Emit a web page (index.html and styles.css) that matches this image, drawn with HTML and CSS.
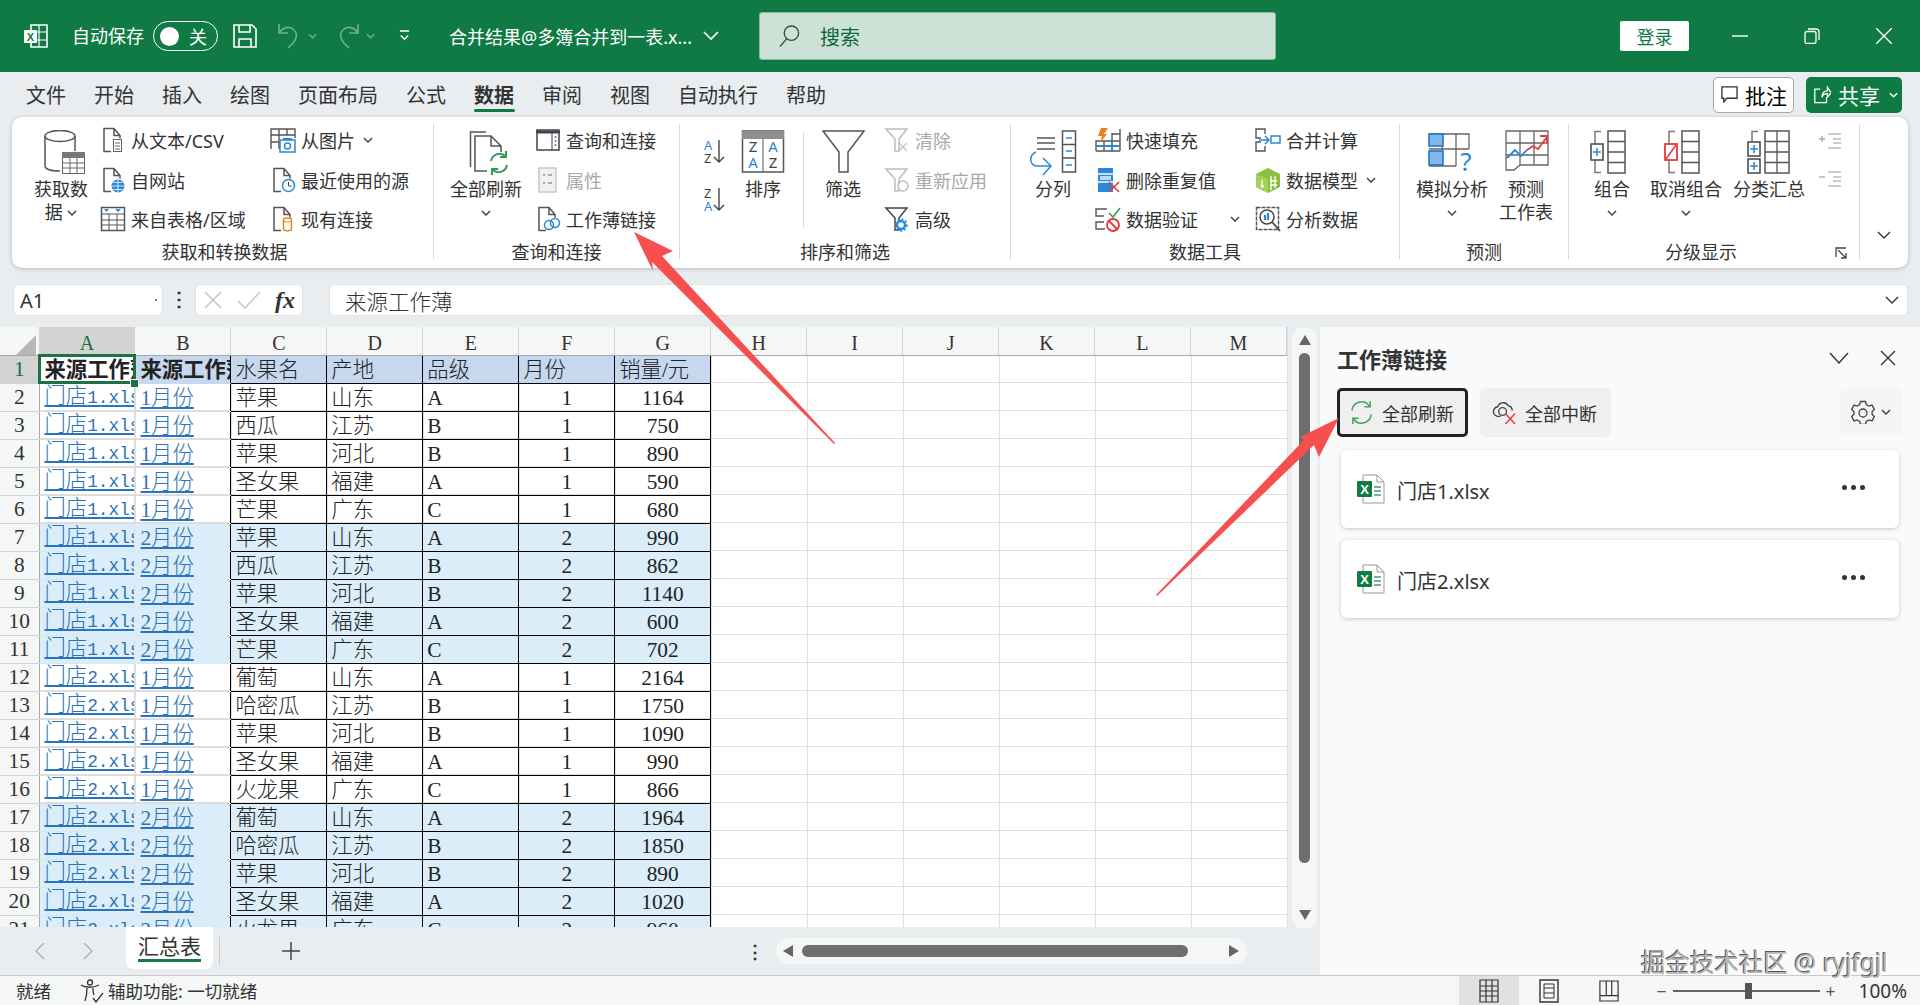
FILE: index.html
```html
<!DOCTYPE html>
<html lang="zh-CN">

<head>
    <meta charset="UTF-8">
    <title>合并结果@多簿合并到一表.xlsx - Excel</title>
    <link rel="stylesheet" href="styles.css">
</head>

<body>
    <svg class="sprite">
        <symbol id="chev" viewBox="0 0 10 6"><path d="M1 1l4 4 4-4" fill="none" stroke="#444" stroke-width="1.5"/></symbol>
        <symbol id="chevw" viewBox="0 0 10 6"><path d="M1 1l4 4 4-4" fill="none" stroke="#fff" stroke-width="1.5"/></symbol>
        <symbol id="doc" viewBox="0 0 26 26"><path d="M11 24.5H4V1.5h10l6 7v3M14 1.5v7h6" fill="none" stroke="#555" stroke-width="1.5"/></symbol>
        <symbol id="funnel" viewBox="0 0 26 26"><path d="M2 2h21l-8 10v12h-4V12z" fill="none" stroke="currentColor" stroke-width="1.5"/></symbol>
        <symbol id="xl" viewBox="0 0 28 30"><path d="M6 1h14l7 7v21H6z" fill="#fff" stroke="#999"/><path d="M20 1v7h7" fill="none" stroke="#999"/><path d="M17 13h7M17 17h7M17 21h7" stroke="#4a9a6b" stroke-width="1.5"/><rect y="7" width="15" height="16" rx="1" fill="#107c41"/><text x="7.5" y="20" class="xl-x">X</text></symbol>
    </svg>

    <header class="titlebar">
        <svg class="i-excel" viewBox="0 0 24 24"><path d="M7 1h16v22H7z" fill="none" stroke="#fff" stroke-width="1.6"/><path d="M15 1v22M7 8h16M7 16h16" stroke="#fff" stroke-width="1.2"/><rect y="6" width="13" height="13" rx="1" fill="#fff"/><text x="6.5" y="16.5" class="xl-g">X</text></svg>
        <span class="qa-label">自动保存</span>
        <div class="toggle"><i class="knob"></i><span>关</span></div>
        <svg class="i-save" viewBox="0 0 24 24"><path d="M1 1h18l4 4v18H1zM6 1v7h11V1M6 23v-8h12v8" fill="none" stroke="#fff" stroke-width="1.6"/></svg>
        <svg class="i-undo" viewBox="0 0 25 26"><path d="M2 1v9h9M2 10c4-6 10-7 14-4 5 4 4 10 0 14l-5 5" fill="none" stroke="#6fb08d" stroke-width="1.6"/></svg>
        <svg class="chev-sm" viewBox="0 0 10 6"><path d="M1 1l4 4 4-4" fill="none" stroke="#6fb08d" stroke-width="1.5"/></svg>
        <svg class="i-redo" viewBox="0 0 25 26"><path d="M23 1v9h-9M23 10c-4-6-10-7-14-4-5 4-4 10 0 14l5 5" fill="none" stroke="#6fb08d" stroke-width="1.6"/></svg>
        <svg class="chev-sm" viewBox="0 0 10 6"><path d="M1 1l4 4 4-4" fill="none" stroke="#6fb08d" stroke-width="1.5"/></svg>
        <svg class="i-custom" viewBox="0 0 12 14"><path d="M1 1h10M2 6l4 4 4-4" fill="none" stroke="#fff" stroke-width="1.6"/></svg>
        <span class="doc-title">合并结果@多簿合并到一表.x...</span>
        <svg class="i-titlechev" viewBox="0 0 16 10"><path d="M1 1l7 7 7-7" fill="none" stroke="#fff" stroke-width="1.6"/></svg>
        <div class="search">
            <svg class="i-search" viewBox="0 0 22 24"><circle cx="13" cy="9" r="7.5" fill="none" stroke="#3b4a42" stroke-width="1.4"/><path d="M8 15l-7 8" stroke="#3b4a42" stroke-width="1.4"/></svg>
            <span>搜索</span>
        </div>
        <button class="login">登录</button>
        <div class="winbtns">
            <svg viewBox="0 0 16 16"><path d="M0 8h16" stroke="#fff" stroke-width="1.4"/></svg>
            <svg viewBox="0 0 16 16"><path d="M1 5.5a2 2 0 012-2h7a2 2 0 012 2v8a2 2 0 01-2 2H3a2 2 0 01-2-2zM4 1h8a3 3 0 013 3v8" fill="none" stroke="#fff" stroke-width="1.3"/></svg>
            <svg viewBox="0 0 16 16"><path d="M0 0l16 16M16 0L0 16" stroke="#fff" stroke-width="1.4"/></svg>
        </div>
    </header>

    <nav class="tabs">
        <span>文件</span><span>开始</span><span>插入</span><span>绘图</span><span>页面布局</span><span>公式</span>
        <span class="tab-active">数据</span><span>审阅</span><span>视图</span><span>自动执行</span><span>帮助</span>
        <div class="tab-actions">
            <button class="comment-btn">
                <svg viewBox="0 0 18 18"><path d="M1 1h16v12H6l-3 4v-4H1z" fill="none" stroke="#333" stroke-width="1.4"/></svg>批注
            </button>
            <button class="share-btn">
                <svg viewBox="0 0 20 20"><path d="M8 4H2v15h13v-6M10 13c0-5 3-7 6-7V2l4 6-4 5V9c-3 0-5 1-6 4z" fill="none" stroke="#fff" stroke-width="1.4"/></svg>共享
                <svg class="chev-sm" viewBox="0 0 10 6"><use href="#chevw"/></svg>
            </button>
        </div>
    </nav>

    <section class="ribbon">
        <div class="group g1">
            <div class="tools">
                <div class="big w72">
                    <svg class="lg" viewBox="0 0 48 48"><ellipse cx="23" cy="6" rx="15" ry="5.5" fill="none" stroke="#555" stroke-width="1.5"/><path d="M8 6v30c0 3 6 5 15 5M38 6v15" fill="none" stroke="#555" stroke-width="1.5"/><rect x="25.5" y="22.5" width="22" height="21" fill="#fff" stroke="#666"/><rect x="25" y="22" width="23" height="6" fill="#777"/><path d="M33 28v15M40 28v15M26 33h21M26 38h21" stroke="#666"/></svg>
                    <span>获取数<br>据 <svg class="chev"><use href="#chev"/></svg></span>
                </div>
                <div class="col c170 m3">
                    <div class="sm"><svg class="ico" viewBox="0 0 26 26"><use href="#doc"/><rect x="13.5" y="12.5" width="8" height="12" fill="#fff" stroke="#666"/><path d="M15 16h5M15 19h5M15 22h5" stroke="#666"/></svg>从文本/CSV</div>
                    <div class="sm"><svg class="ico" viewBox="0 0 26 26"><use href="#doc"/><circle cx="18" cy="19" r="6.5" fill="#2b88d8"/><path d="M11.5 19h13M18 12.5v13M13.5 15.5h9M13.5 22.5h9" stroke="#fff" stroke-width=".8"/></svg>自网站</div>
                    <div class="sm"><svg class="ico" viewBox="0 0 26 26"><rect x="1.5" y="1.5" width="23" height="23" fill="none" stroke="#555" stroke-width="1.5"/><path d="M1 8h24M1 14h24M1 19h24M9 8v17M17 8v17" stroke="#555"/><path d="M4 3h5l-2.500 3zM15 3h6l-3 3z" fill="#2b88d8"/></svg>来自表格/区域</div>
                </div>
                <div class="col">
                    <div class="sm"><svg class="ico" viewBox="0 0 26 26"><path d="M1 22V2h24v9M1 8h24M1 15h10M9 2v20M17 2v6" fill="none" stroke="#555" stroke-width="1.4"/><rect x="10" y="13" width="15" height="12" fill="#fff" stroke="#2b88d8" stroke-width="1.5"/><circle cx="17.500" cy="19" r="3" fill="none" stroke="#2b88d8" stroke-width="1.500"/><path d="M13 12h9" stroke="#2b88d8" stroke-width="2"/></svg>从图片 <svg class="chev"><use href="#chev"/></svg></div>
                    <div class="sm"><svg class="ico" viewBox="0 0 26 26"><use href="#doc"/><circle cx="18.500" cy="18.500" r="6" fill="#fff" stroke="#2b88d8" stroke-width="1.500"/><path d="M18.500 15v4h3" fill="none" stroke="#444"/></svg>最近使用的源</div>
                    <div class="sm"><svg class="ico" viewBox="0 0 26 26"><use href="#doc"/><path d="M13.500 13.500c0-2 8-2 8 0v10c0 1.500-8 1.500-8 0z" fill="#fff" stroke="#e8821e" stroke-width="1.500"/><path d="M13.500 14.500c0 2 8 2 8 0" fill="none" stroke="#e8821e"/></svg>现有连接</div>
                </div>
            </div>
            <div class="label">获取和转换数据</div>
        </div>

        <div class="group g2">
            <div class="tools">
                <div class="big w76">
                    <svg class="lg" viewBox="0 0 48 48"><path d="M8.500 37V2H24" fill="none" stroke="#555" stroke-width="1.500"/><path d="M25 41H13V6h16l10 10v6M29 6v10h10" fill="none" stroke="#555" stroke-width="1.500"/><path d="M29 31a8.500 8.500 0 0114-5M45 35a8.500 8.500 0 01-14 5" fill="none" stroke="#2f9e4f" stroke-width="2"/><path d="M44 21v6h-6M30 45v-6h6" fill="none" stroke="#2f9e4f" stroke-width="2"/></svg>
                    <span>全部刷新</span>
                    <svg class="chev below"><use href="#chev"/></svg>
                </div>
                <div class="col m11">
                    <div class="sm"><svg class="ico" viewBox="0 0 26 26"><rect x="2" y="3" width="22" height="20" fill="none" stroke="#444" stroke-width="1.500"/><path d="M1 5h24" stroke="#444" stroke-width="3"/><path d="M17 6v17" stroke="#444"/><path d="M20.500 9v2M20.500 13v2M20.500 17v2" stroke="#2b88d8" stroke-width="1.500"/></svg>查询和连接</div>
                    <div class="sm off"><svg class="ico" viewBox="0 0 26 26"><rect x="4" y="1" width="17" height="24" fill="#f1f1f1" stroke="#c9c9c9" stroke-width="1.500"/><path d="M8 8h2M8 16h2M13 8h4M13 16h4" stroke="#aaa" stroke-width="2"/></svg>属性</div>
                    <div class="sm"><svg class="ico" viewBox="0 0 26 26"><use href="#doc"/><circle cx="14" cy="19" r="4.500" fill="none" stroke="#2b88d8" stroke-width="1.500"/><circle cx="20" cy="17" r="4.500" fill="none" stroke="#2b88d8" stroke-width="1.500"/></svg>工作薄链接</div>
                </div>
            </div>
            <div class="label">查询和连接</div>
        </div>

        <div class="group g3">
            <div class="tools">
                <div class="sort-col">
                    <svg class="i-sort" viewBox="0 0 28 26"><text x="6" y="11" class="s-blue">A</text><text x="6" y="24" class="s-dark">Z</text><path d="M21 1v22M16 18l5 5 5-5" fill="none" stroke="#444" stroke-width="1.400"/></svg>
                    <svg class="i-sort" viewBox="0 0 28 26"><text x="6" y="11" class="s-dark">Z</text><text x="6" y="24" class="s-blue">A</text><path d="M21 1v22M16 18l5 5 5-5" fill="none" stroke="#444" stroke-width="1.400"/></svg>
                </div>
                <div class="big w48 m14">
                    <svg class="lg" viewBox="0 0 48 48"><rect x="3.500" y="1" width="41" height="41" fill="#fff" stroke="#555" stroke-width="1.500"/><rect x="3" y="1" width="42" height="8" fill="#8f8f8f"/><path d="M24 9v33" stroke="#555"/><text x="14" y="22" class="b-dark">Z</text><text x="14" y="38" class="b-blue">A</text><text x="34" y="22" class="b-blue">A</text><text x="34" y="38" class="b-dark">Z</text></svg>
                    <span>排序</span>
                </div>
                <i class="vsep"></i>
                <div class="big w48">
                    <svg class="lg" viewBox="0 0 48 48"><path d="M4 1h41L29 22v20h-9V22z" fill="none" stroke="#555" stroke-width="1.500"/></svg>
                    <span>筛选</span>
                </div>
                <div class="col m17">
                    <div class="sm off"><svg class="ico grey" viewBox="0 0 26 26"><use href="#funnel"/><path d="M15 16l8 8M23 16l-8 8" stroke="#b5c9dd" stroke-width="1.400"/></svg>清除</div>
                    <div class="sm off"><svg class="ico grey" viewBox="0 0 26 26"><use href="#funnel"/><circle cx="19" cy="19" r="5" fill="#fff" stroke="#bbb" stroke-width="1.500"/></svg>重新应用</div>
                    <div class="sm"><svg class="ico dark" viewBox="0 0 26 26"><use href="#funnel"/><circle cx="17" cy="19" r="4" fill="#fff" stroke="#2b88d8" stroke-width="2.500"/><circle cx="17" cy="19" r="6" fill="none" stroke="#2b88d8" stroke-width="1.500" stroke-dasharray="2 2"/></svg>高级</div>
                </div>
            </div>
            <div class="label">排序和筛选</div>
        </div>

        <div class="group g4">
            <div class="tools">
                <div class="big w48">
                    <svg class="lg" viewBox="0 0 48 48"><path d="M8 8h18M8 13h18M8 19h18" stroke="#555" stroke-width="1.500"/><rect x="33.500" y="1" width="13" height="41" fill="#fff" stroke="#555" stroke-width="1.500"/><path d="M33 14.500h14M33 28h14" stroke="#555" stroke-width="1.500"/><path d="M37 8h6M37 21h6M37 35h6" stroke="#2b88d8" stroke-width="1.500"/><path d="M7 22c-7 3-7 12 0 14h14M14 28l8 8-8 9" fill="none" stroke="#2b88d8" stroke-width="1.500"/></svg>
                    <span>分列</span>
                </div>
                <div class="col c160 m18">
                    <div class="sm"><svg class="ico" viewBox="0 0 26 26"><path d="M1 24V14h24M1 19h24M1 24h24M9 14v10M17 6v18M25 2v22M17 7h8" fill="none" stroke="#555" stroke-width="1.400"/><path d="M17 14v10" stroke="#2b88d8" stroke-width="2"/><path d="M1 19h24" stroke="#2b88d8" stroke-width="1.600"/><path d="M6 1h7l-4 6h3l-7 9 2-7H3z" fill="#e8821e"/></svg>快速填充</div>
                    <div class="sm"><svg class="ico" viewBox="0 0 26 26"><rect x="3" y="1" width="15" height="24" fill="#2b88d8"/><path d="M3 7h15M3 15h15" stroke="#fff" stroke-width="1.500"/><rect x="5" y="9" width="11" height="4" fill="#b9d8f2"/><path d="M14 15l10 10M24 15L14 25" stroke="#e23b3b" stroke-width="1.600"/></svg>删除重复值</div>
                    <div class="sm"><svg class="ico" viewBox="0 0 26 26"><path d="M12 3H1v7h8M9 16H1v7h9" fill="none" stroke="#555" stroke-width="1.400"/><path d="M14 7l4 4 7-9" fill="none" stroke="#2f9e4f" stroke-width="1.500"/><circle cx="18" cy="19" r="6" fill="#fff" stroke="#e23b3b" stroke-width="1.800"/><path d="M14 15l8 8" stroke="#e23b3b" stroke-width="1.800"/></svg>数据验证<svg class="chev wide"><use href="#chev"/></svg></div>
                </div>
                <div class="col">
                    <div class="sm"><svg class="ico" viewBox="0 0 26 26"><path d="M10 7V2H1v9h5M10 19v5H1v-9h5" fill="none" stroke="#555" stroke-width="1.400"/><rect x="16" y="9" width="9" height="7" fill="none" stroke="#2b88d8" stroke-width="1.500"/><path d="M4 13h10M10 9l4 4-4 4" fill="none" stroke="#2b88d8" stroke-width="1.500"/></svg>合并计算</div>
                    <div class="sm"><svg class="ico" viewBox="0 0 26 26"><path d="M1 7l12-6 12 6v13l-12 6-12-6z" fill="#8cbf3f"/><path d="M1 7l12 5v14L1 20z" fill="#a6d25a"/><path d="M7 13v8M6 19h3M16 9v14M20 9v12M15 14h7M15 18h7" stroke="#fff" stroke-width="1.300"/></svg>数据模型 <svg class="chev"><use href="#chev"/></svg></div>
                    <div class="sm"><svg class="ico" viewBox="0 0 26 26"><rect x="1.500" y="1.500" width="22" height="22" fill="none" stroke="#555" stroke-width="1.500" stroke-dasharray="4 1"/><circle cx="12" cy="11" r="7" fill="#fff" stroke="#444" stroke-width="1.500"/><path d="M17 16l8 9" stroke="#444" stroke-width="1.800"/><path d="M10 9v5M13 7v7" stroke="#2b88d8" stroke-width="2.200"/></svg>分析数据</div>
                </div>
            </div>
            <div class="label">数据工具</div>
        </div>

        <div class="group g5">
            <div class="tools">
                <div class="big w76">
                    <svg class="lg" viewBox="0 0 48 48"><path d="M1 4h40v15M1 19h40M14 4v32M28 4v32M1 36h27" fill="none" stroke="#666" stroke-width="1.300"/><rect x="1" y="4" width="14" height="12" fill="#7eb8ec" stroke="#1f6fb8" stroke-width="1.500"/><rect x="1" y="21" width="14" height="14" fill="#7eb8ec" stroke="#1f6fb8" stroke-width="1.500"/><text x="38" y="41" class="q-mark">?</text></svg>
                    <span>模拟分析</span>
                    <svg class="chev below"><use href="#chev"/></svg>
                </div>
                <div class="big w60 m6">
                    <svg class="lg" viewBox="0 0 48 48"><path d="M4 38V1h42v34H18l-6 5H4zM4 13h42M4 25h42M18 1v34M32 1v34" fill="none" stroke="#666" stroke-width="1.300"/><path d="M5 28l8-8 6 6 6-6" fill="none" stroke="#2b88d8" stroke-width="1.800"/><path d="M25 20l6-4 5 3 9-12M38 6h7v7" fill="none" stroke="#e23b3b" stroke-width="1.800"/></svg>
                    <span>预测<br>工作表</span>
                </div>
            </div>
            <div class="label">预测</div>
        </div>

        <div class="group g6">
            <div class="tools">
                <div class="big w60">
                    <svg class="lg" viewBox="0 0 48 48"><path d="M13 1.500H7v12M13 42.500H7v-12" fill="none" stroke="#777" stroke-width="1.500"/><rect x="3" y="14" width="12" height="16" fill="#fff" stroke="#444" stroke-width="1.500"/><path d="M5 22h8M9 18v8" stroke="#2b88d8" stroke-width="1.600"/><rect x="20" y="1" width="17" height="42" fill="#fff" stroke="#555" stroke-width="1.500"/><path d="M20 11.500h17M20 22h17M20 32.500h17" stroke="#555" stroke-width="1.300"/></svg>
                    <span>组合</span>
                    <svg class="chev below"><use href="#chev"/></svg>
                </div>
                <div class="big w76 m6">
                    <svg class="lg" viewBox="0 0 48 48"><path d="M13 1.500H7v12M13 42.500H7v-12" fill="none" stroke="#777" stroke-width="1.500"/><rect x="3" y="14" width="12" height="16" fill="#fff" stroke="#e23b3b" stroke-width="1.800"/><path d="M4 29L14 15" stroke="#e23b3b" stroke-width="1.500"/><rect x="20" y="1" width="17" height="42" fill="#fff" stroke="#555" stroke-width="1.500"/><path d="M20 11.500h17M20 22h17M20 32.500h17" stroke="#555" stroke-width="1.300"/></svg>
                    <span>取消组合</span>
                    <svg class="chev below"><use href="#chev"/></svg>
                </div>
                <div class="big w76 m7">
                    <svg class="lg" viewBox="0 0 48 48"><path d="M13 1.500H7v10" fill="none" stroke="#777" stroke-width="1.500"/><rect x="3" y="12" width="12" height="14" fill="#fff" stroke="#444" stroke-width="1.500"/><rect x="3" y="29" width="12" height="14" fill="#fff" stroke="#444" stroke-width="1.500"/><path d="M5 19h8M9 15v8M5 36h8M9 32v8" stroke="#2b88d8" stroke-width="1.600"/><rect x="20" y="1" width="24" height="42" fill="#fff" stroke="#555" stroke-width="1.500"/><path d="M20 11.500h24M20 22h24M20 32.500h24M32 1v42" stroke="#555" stroke-width="1.300"/></svg>
                    <span>分类汇总</span>
                </div>
                <div class="outline-col">
                    <svg class="i-outline" viewBox="0 0 22 16"><path d="M0 6h6M3 3v6" stroke="#a9a9a9" stroke-width="1.300"/><path d="M9 1h13M14 6h8M14 10h8M9 15h13" stroke="#bdbdbd" stroke-width="1.500"/></svg>
                    <svg class="i-outline" viewBox="0 0 22 16"><path d="M0 6h6" stroke="#a9a9a9" stroke-width="1.300"/><path d="M9 1h13M14 6h8M14 10h8M9 15h13" stroke="#bdbdbd" stroke-width="1.500"/></svg>
                </div>
            </div>
            <div class="label">分级显示</div>
            <svg class="i-launch" viewBox="0 0 12 12"><path d="M1 10V1h10" fill="none" stroke="#444" stroke-width="1.300"/><path d="M3 3l8 8M11 6v5H6" fill="none" stroke="#444" stroke-width="1.300"/></svg>
        </div>
        <div class="collapse">
            <svg viewBox="0 0 14 8"><path d="M1 1l6 6 6-6" fill="none" stroke="#333" stroke-width="1.400"/></svg>
        </div>
    </section>

    <section class="formula">
        <div class="namebox">A1<i></i></div>
        <div class="dots">⋮</div>
        <div class="fxbox">
            <svg viewBox="0 0 18 18"><path d="M1 1l16 16M17 1L1 17" stroke="#c4c4c4" stroke-width="1.500"/></svg>
            <svg class="chk" viewBox="0 0 24 18"><path d="M1 10l7 7L23 1" fill="none" stroke="#c4c4c4" stroke-width="1.500"/></svg>
            <span class="fx">fx</span>
        </div>
        <div class="fxinput">来源工作薄
            <svg viewBox="0 0 14 8"><path d="M1 1l6 6 6-6" fill="none" stroke="#333" stroke-width="1.400"/></svg>
        </div>
    </section>

    <main class="main">
        <div class="sheet-area">
            <div class="sheet-top">
                <div class="cells">
                    <table class="grid">
                        <thead>
                            <tr>
                                <th class="corner"><svg viewBox="0 0 20 20"><path d="M20 0v20H0z" fill="#b8b8b8"/></svg></th>
                                <th class="cur">A</th><th>B</th><th>C</th><th>D</th><th>E</th><th>F</th><th>G</th><th>H</th><th>I</th><th>J</th><th>K</th><th>L</th><th>M</th>
                            </tr>
                        </thead>
                        <tbody>
                            <tr class="head"><th class="cur">1</th><td class="ab active"><div class="clip">来源工作薄</div><i class="handle"></i></td><td class="ab">来源工作薄</td><td>水果名</td><td>产地</td><td>品级</td><td>月份</td><td>销量/元</td></tr>
                            <tr><th>2</th><td class="ab"><a>门店<span class="en">1.xlsx</span></a></td><td class="ab"><a>1月份</a></td><td>苹果</td><td>山东</td><td>A</td><td class="mid">1</td><td class="mid">1164</td></tr>
                            <tr><th>3</th><td class="ab"><a>门店<span class="en">1.xlsx</span></a></td><td class="ab"><a>1月份</a></td><td>西瓜</td><td>江苏</td><td>B</td><td class="mid">1</td><td class="mid">750</td></tr>
                            <tr><th>4</th><td class="ab"><a>门店<span class="en">1.xlsx</span></a></td><td class="ab"><a>1月份</a></td><td>苹果</td><td>河北</td><td>B</td><td class="mid">1</td><td class="mid">890</td></tr>
                            <tr><th>5</th><td class="ab"><a>门店<span class="en">1.xlsx</span></a></td><td class="ab"><a>1月份</a></td><td>圣女果</td><td>福建</td><td>A</td><td class="mid">1</td><td class="mid">590</td></tr>
                            <tr><th>6</th><td class="ab"><a>门店<span class="en">1.xlsx</span></a></td><td class="ab"><a>1月份</a></td><td>芒果</td><td>广东</td><td>C</td><td class="mid">1</td><td class="mid">680</td></tr>
                            <tr class="blue"><th>7</th><td class="ab"><a>门店<span class="en">1.xlsx</span></a></td><td class="ab"><a>2月份</a></td><td>苹果</td><td>山东</td><td>A</td><td class="mid">2</td><td class="mid">990</td></tr>
                            <tr class="blue"><th>8</th><td class="ab"><a>门店<span class="en">1.xlsx</span></a></td><td class="ab"><a>2月份</a></td><td>西瓜</td><td>江苏</td><td>B</td><td class="mid">2</td><td class="mid">862</td></tr>
                            <tr class="blue"><th>9</th><td class="ab"><a>门店<span class="en">1.xlsx</span></a></td><td class="ab"><a>2月份</a></td><td>苹果</td><td>河北</td><td>B</td><td class="mid">2</td><td class="mid">1140</td></tr>
                            <tr class="blue"><th>10</th><td class="ab"><a>门店<span class="en">1.xlsx</span></a></td><td class="ab"><a>2月份</a></td><td>圣女果</td><td>福建</td><td>A</td><td class="mid">2</td><td class="mid">600</td></tr>
                            <tr class="blue"><th>11</th><td class="ab"><a>门店<span class="en">1.xlsx</span></a></td><td class="ab"><a>2月份</a></td><td>芒果</td><td>广东</td><td>C</td><td class="mid">2</td><td class="mid">702</td></tr>
                            <tr><th>12</th><td class="ab"><a>门店<span class="en">2.xlsx</span></a></td><td class="ab"><a>1月份</a></td><td>葡萄</td><td>山东</td><td>A</td><td class="mid">1</td><td class="mid">2164</td></tr>
                            <tr><th>13</th><td class="ab"><a>门店<span class="en">2.xlsx</span></a></td><td class="ab"><a>1月份</a></td><td>哈密瓜</td><td>江苏</td><td>B</td><td class="mid">1</td><td class="mid">1750</td></tr>
                            <tr><th>14</th><td class="ab"><a>门店<span class="en">2.xlsx</span></a></td><td class="ab"><a>1月份</a></td><td>苹果</td><td>河北</td><td>B</td><td class="mid">1</td><td class="mid">1090</td></tr>
                            <tr><th>15</th><td class="ab"><a>门店<span class="en">2.xlsx</span></a></td><td class="ab"><a>1月份</a></td><td>圣女果</td><td>福建</td><td>A</td><td class="mid">1</td><td class="mid">990</td></tr>
                            <tr><th>16</th><td class="ab"><a>门店<span class="en">2.xlsx</span></a></td><td class="ab"><a>1月份</a></td><td>火龙果</td><td>广东</td><td>C</td><td class="mid">1</td><td class="mid">866</td></tr>
                            <tr class="blue"><th>17</th><td class="ab"><a>门店<span class="en">2.xlsx</span></a></td><td class="ab"><a>2月份</a></td><td>葡萄</td><td>山东</td><td>A</td><td class="mid">2</td><td class="mid">1964</td></tr>
                            <tr class="blue"><th>18</th><td class="ab"><a>门店<span class="en">2.xlsx</span></a></td><td class="ab"><a>2月份</a></td><td>哈密瓜</td><td>江苏</td><td>B</td><td class="mid">2</td><td class="mid">1850</td></tr>
                            <tr class="blue"><th>19</th><td class="ab"><a>门店<span class="en">2.xlsx</span></a></td><td class="ab"><a>2月份</a></td><td>苹果</td><td>河北</td><td>B</td><td class="mid">2</td><td class="mid">890</td></tr>
                            <tr class="blue"><th>20</th><td class="ab"><a>门店<span class="en">2.xlsx</span></a></td><td class="ab"><a>2月份</a></td><td>圣女果</td><td>福建</td><td>A</td><td class="mid">2</td><td class="mid">1020</td></tr>
                            <tr class="blue"><th>21</th><td class="ab"><a>门店<span class="en">2.xlsx</span></a></td><td class="ab"><a>2月份</a></td><td>火龙果</td><td>广东</td><td>C</td><td class="mid">2</td><td class="mid">960</td></tr>
                        </tbody>
                    </table>
                </div>
                <div class="vscroll">
                    <i class="arrow-up"></i>
                    <i class="vthumb"></i>
                    <i class="arrow-down"></i>
                </div>
            </div>
            <div class="sheetbar">
                <svg class="sheet-nav" viewBox="0 0 10 18"><path d="M9 1L1 9l8 8" fill="none" stroke="#b0b0b0" stroke-width="1.500"/></svg>
                <svg class="sheet-nav next" viewBox="0 0 10 18"><path d="M1 1l8 8-8 8" fill="none" stroke="#b0b0b0" stroke-width="1.500"/></svg>
                <div class="sheet-tab"><span>汇总表</span></div>
                <i class="sheet-sep"></i>
                <svg class="sheet-add" viewBox="0 0 18 18"><path d="M9 0v18M0 9h18" stroke="#444" stroke-width="1.500"/></svg>
                <span class="sheet-dots">⋮</span>
                <div class="hscroll">
                    <i class="arrow-left"></i>
                    <i class="hthumb"></i>
                    <i class="arrow-right"></i>
                </div>
            </div>
        </div>

        <aside class="panel">
            <div class="panel-head">
                <h2>工作薄链接</h2>
                <svg viewBox="0 0 20 12"><path d="M1 1l9 10 9-10" fill="none" stroke="#333" stroke-width="1.400"/></svg>
                <svg class="p-close" viewBox="0 0 16 16"><path d="M1 1l14 14M15 1L1 15" stroke="#333" stroke-width="1.400"/></svg>
            </div>
            <div class="panel-btns">
                <button class="pbtn focus">
                    <svg viewBox="0 0 26 26"><path d="M3 11a10 10 0 0118-5M23 15a10 10 0 01-18 5" fill="none" stroke="#3aa35c" stroke-width="1.500"/><path d="M22 1v6h-6M4 25v-6h6" fill="none" stroke="#3aa35c" stroke-width="1.500"/></svg>全部刷新
                </button>
                <button class="pbtn">
                    <svg viewBox="0 0 26 26"><path d="M9 17H7a5 5 0 01-1-10 6 6 0 0111-1 5 5 0 014 5" fill="none" stroke="#444" stroke-width="1.400"/><circle cx="11" cy="12" r="4" fill="none" stroke="#444" stroke-width="1.400"/><path d="M14 14l10 11M24 14L14 25" stroke="#e23b3b" stroke-width="1.400"/></svg>全部中断
                </button>
                <button class="gear">
                    <svg viewBox="0 0 24 24"><path d="M9.500 1.500h5l.8 3 2.700 1.500 3-.9 2.300 4.300-2.200 2.100v3l2.200 2.100-2.300 4.300-3-.9-2.700 1.500-.8 3h-5l-.8-3-2.700-1.500-3 .9L.7 16.600l2.200-2.100v-3L.7 9.400 3 5.100l3 .9 2.700-1.500z" fill="none" stroke="#444" stroke-width="1.300"/><circle cx="12" cy="13" r="4" fill="none" stroke="#444" stroke-width="1.300"/></svg>
                    <svg class="chev"><use href="#chev"/></svg>
                </button>
            </div>
            <div class="card">
                <svg class="i-xl"><use href="#xl"/></svg>
                <span>门店1.xlsx</span>
                <b class="more"><i></i><i></i><i></i></b>
            </div>
            <div class="card">
                <svg class="i-xl"><use href="#xl"/></svg>
                <span>门店2.xlsx</span>
                <b class="more"><i></i><i></i><i></i></b>
            </div>
        </aside>
    </main>

    <footer class="status">
        <span class="ready">就绪</span>
        <svg class="i-access" viewBox="0 0 24 24"><circle cx="10" cy="3.500" r="2.500" fill="none" stroke="#333" stroke-width="1.300"/><path d="M1 6c4 3 12 3 18 0M7 9c0 5 0 7-2 13M13 9c0 3 0 5 1 7M13 19l3 4 7-9" fill="none" stroke="#333" stroke-width="1.300"/></svg>
        <span>辅助功能: 一切就绪</span>
        <div class="views">
            <div class="view on"><svg viewBox="0 0 20 24"><path d="M1 1h18v22H1zM1 7h18M1 12h18M1 17h18M7 1v22M13 1v22" fill="none" stroke="#333" stroke-width="1.200"/></svg></div>
            <div class="view"><svg viewBox="0 0 20 24"><path d="M1 1h18v22H1z" fill="none" stroke="#333" stroke-width="1.400"/><path d="M5 5h10v14H5zM5 9h10M5 14h10" fill="none" stroke="#333"/></svg></div>
            <div class="view"><svg viewBox="0 0 22 24"><path d="M1 1h20v22H1zM1 17h20M8 1v16M14 1v16" fill="none" stroke="#333" stroke-width="1.300"/></svg></div>
        </div>
        <div class="zoom">
            <span>−</span>
            <div class="slider"><i></i></div>
            <span>+</span>
        </div>
        <span class="pct">100%</span>
    </footer>

    <div class="watermark">掘金技术社区 @ ryjfgjl</div>

    <svg class="arrows" viewBox="0 0 1920 1005">
        <polygon points="634,232 673,251 662,256 835,443 834,444 652,262 653,271"/>
        <polygon points="1339,418 1319,457 1314,445 1157,596 1156,595 1304,440 1300,437"/>
    </svg>
</body>

</html>
```

FILE: styles.css
```css
* {
    box-sizing: border-box;
}

body {
    margin: 0;
    height: 1005px;
    overflow: hidden;
    background-color: #e9edf0;
    color: #333;
    font-family: "Noto Sans", "Noto Sans CJK SC", sans-serif;
    font-size: 18px;
    display: flex;
    flex-direction: column;
    position: relative;
}

button {
    font: inherit;
    border: none;
    padding: 0;
}

svg {
    flex: none;
    display: block;
}

.sprite {
    display: none;
}

.xl-x {
    font: bold 13px "Liberation Sans", sans-serif;
    fill: #fff;
    text-anchor: middle;
}

.xl-g {
    font: bold 11px "Liberation Sans", sans-serif;
    fill: #107a45;
    text-anchor: middle;
}

/* title bar */

.titlebar {
    height: 72px;
    flex: none;
    background-color: #107a45;
    color: #fff;
    display: flex;
    align-items: center;
    padding-left: 24px;
}

.i-excel {
    width: 24px;
    height: 24px;
}

.qa-label {
    margin-left: 24px;
    line-height: 24px;
}

.toggle {
    margin-left: 9px;
    width: 65px;
    height: 30px;
    border: 1.5px solid #fff;
    border-radius: 15px;
    display: flex;
    align-items: center;
    padding-left: 6px;
    gap: 10px;
}

.knob {
    width: 19px;
    height: 19px;
    border-radius: 50%;
    background-color: #fff;
}

.i-save {
    width: 24px;
    height: 24px;
    margin-left: 15px;
}

.i-undo,
.i-redo {
    width: 25px;
    height: 26px;
}

.i-undo {
    margin-left: 20px;
}

.i-redo {
    margin-left: 18px;
}

.chev-sm {
    width: 9px;
    height: 6px;
    margin-left: 6px;
}

.i-custom {
    width: 11px;
    height: 13px;
    margin-left: 24px;
}

.doc-title {
    margin-left: 39px;
    width: 244px;
    white-space: nowrap;
}

.i-titlechev {
    width: 16px;
    height: 10px;
    margin-left: 10px;
}

.search {
    margin-left: 40px;
    width: 517px;
    height: 48px;
    background-color: #cde2d6;
    border: 1px solid #8fb3a0;
    border-radius: 3px;
    display: flex;
    align-items: center;
    padding-left: 19px;
    gap: 20px;
    color: #10683c;
    font-size: 20px;
}

.i-search {
    width: 21px;
    height: 24px;
}

.login {
    margin-left: auto;
    width: 69px;
    height: 30px;
    background-color: #fff;
    color: #107a45;
    border-radius: 2px;
}

.winbtns {
    display: flex;
    gap: 56px;
    margin-left: 43px;
    margin-right: 28px;
}

.winbtns svg {
    width: 16px;
    height: 16px;
}

/* ribbon tabs */

.tabs {
    height: 45px;
    flex: none;
    display: flex;
    align-items: center;
    gap: 28px;
    padding-left: 26px;
    padding-right: 18px;
    font-size: 20px;
}

.tab-active {
    position: relative;
    font-weight: 700;
}

.tab-active::after {
    content: "";
    position: absolute;
    left: 0;
    right: -1px;
    bottom: -3px;
    height: 3px;
    border-radius: 2px;
    background-color: #107a45;
}

.tab-actions {
    margin-left: auto;
    display: flex;
    gap: 12px;
    font-size: 21px;
}

.comment-btn,
.share-btn {
    height: 36px;
    border-radius: 5px;
    display: flex;
    align-items: center;
}

.comment-btn {
    width: 81px;
    background-color: #fff;
    border: 1px solid #a5a5a5;
    padding-left: 7px;
    gap: 7px;
}

.comment-btn svg {
    width: 17px;
    height: 17px;
}

.share-btn {
    width: 96px;
    background-color: #107a45;
    color: #fff;
    padding-left: 7px;
    gap: 7px;
}

.share-btn svg:first-child {
    width: 18px;
    height: 19px;
}

.share-btn .chev-sm {
    margin-left: 2px;
}

/* ribbon */

.ribbon {
    height: 151px;
    flex: none;
    margin: 0 12px;
    padding-top: 7px;
    background-color: #fff;
    border-radius: 10px;
    box-shadow: 0 1px 4px rgba(0, 0, 0, 0.22);
    display: flex;
}

.group {
    height: 135px;
    display: flex;
    flex-direction: column;
    border-right: 1px solid #d8d8d8;
    position: relative;
}

.g1 { width: 422px; }
.g2 { width: 246px; }
.g3 { width: 331px; }
.g4 { width: 389px; }
.g5 { width: 169px; }
.g6 { width: 291px; }

.tools {
    flex: 1;
    display: flex;
    min-height: 0;
}

.g1 .tools { padding-left: 13px; }
.g2 .tools { padding-left: 14px; }
.g3 .tools { padding-left: 18px; }
.g4 .tools { padding-left: 18px; }
.g5 .tools { padding-left: 14px; }
.g6 .tools { padding-left: 13px; }

.label {
    height: 18px;
    line-height: 22px;
    text-align: center;
}

.g1 .label { padding-left: 4px; }
.g6 .label { padding-right: 26px; }

.big {
    display: flex;
    flex-direction: column;
    align-items: center;
    padding-top: 6px;
    line-height: 23px;
    text-align: center;
    white-space: nowrap;
}

.w48 { width: 48px; }
.w60 { width: 60px; }
.w72 { width: 72px; }
.w76 { width: 76px; }

.m3 { margin-left: 3px; }
.m6 { margin-left: 6px; }
.m7 { margin-left: 7px; }
.m11 { margin-left: 11px; }
.m14 { margin-left: 13px; }
.m17 { margin-left: 17px; }
.m18 { margin-left: 18px; }

.lg {
    width: 48px;
    height: 48px;
}

.chev {
    display: inline-block;
    width: 10px;
    height: 6px;
    vertical-align: 3px;
}

.chev.below {
    margin-top: 9px;
}

.chev.wide {
    margin-left: 27px;
}

.col {
    display: flex;
    flex-direction: column;
    gap: 9.5px;
    padding-top: 1px;
}

.c170 { width: 170px; }
.c160 { width: 160px; }

.sm {
    height: 30px;
    display: flex;
    align-items: center;
    gap: 5px;
    white-space: nowrap;
}

.sm .chev {
    margin-left: 3px;
}

.sm .chev.wide {
    margin-left: 27px;
}

.off {
    color: #a8a8a8;
}

.ico {
    width: 26px;
    height: 26px;
}

.grey { color: #bdbdbd; }
.dark { color: #444; }

.sort-col {
    width: 28px;
    padding-top: 15px;
    display: flex;
    flex-direction: column;
    gap: 22px;
}

.i-sort {
    width: 28px;
    height: 26px;
}

.s-blue,
.s-dark {
    font: 13px "Noto Sans", sans-serif;
}

.s-blue,
.b-blue { fill: #2b88d8; }
.s-dark,
.b-dark { fill: #444; }

.b-blue,
.b-dark {
    font: 15px "Noto Sans", sans-serif;
    text-anchor: middle;
}

.q-mark {
    font: 26px "Noto Sans", sans-serif;
    fill: #2b88d8;
    text-anchor: middle;
}

.vsep {
    width: 1px;
    height: 94px;
    margin: 9px 15px 0 16px;
    background-color: #d8d8d8;
}

.outline-col {
    margin-left: 12px;
    padding-top: 9px;
    display: flex;
    flex-direction: column;
    gap: 22px;
}

.i-outline {
    width: 22px;
    height: 16px;
}

.i-launch {
    position: absolute;
    right: 12px;
    bottom: 0;
    width: 12px;
    height: 12px;
}

.collapse {
    flex: 1;
    display: flex;
    justify-content: center;
    align-items: flex-end;
    padding-bottom: 20px;
    height: 135px;
}

.collapse svg {
    width: 14px;
    height: 8px;
}

/* formula bar */

.formula {
    flex: none;
    height: 32px;
    margin: 16px 12px 11px 13px;
    display: flex;
    font-size: 20px;
}

.namebox,
.fxbox,
.fxinput {
    background-color: #fff;
    border: 1px solid #e0e0e0;
    border-radius: 6px;
    display: flex;
    align-items: center;
}

.namebox {
    width: 150px;
    padding-left: 6px;
    position: relative;
}

.namebox i {
    position: absolute;
    right: 5px;
    top: 14px;
    width: 2px;
    height: 2px;
    background-color: #777;
}

.dots {
    width: 32px;
    text-align: center;
    line-height: 30px;
    font-weight: 700;
}

.fxbox {
    width: 108px;
    padding-left: 8px;
    gap: 15px;
}

.fxbox svg {
    width: 18px;
    height: 18px;
}

.fxbox .chk {
    width: 24px;
}

.fx {
    font: italic bold 24px "Liberation Serif", serif;
    margin-left: -1px;
}

.fxinput {
    flex: 1;
    margin-left: 26px;
    padding: 0 8px 0 15px;
    justify-content: space-between;
    font-size: 21.5px;
    font-weight: 300;
}

.fxinput svg {
    width: 14px;
    height: 8px;
}

/* worksheet */

.main {
    flex: 1;
    display: flex;
    min-height: 0;
}

.sheet-area {
    width: 1320px;
    display: flex;
    flex-direction: column;
}

.sheet-top {
    height: 600px;
    display: flex;
}

.cells {
    width: 1288px;
    overflow: hidden;
    background-color: #fff;
    background-image: linear-gradient(#dfdfdf 1px, transparent 1px), linear-gradient(90deg, #dfdfdf 1px, transparent 1px);
    background-size: 96px 28px;
    background-position: 39px 27px;
}

.grid {
    width: 1287px;
    table-layout: fixed;
    border-collapse: collapse;
    font-family: "Liberation Serif", "Noto Sans CJK SC", serif;
    font-size: 21.33px;
    font-weight: 300;
    color: #222;
}

.grid th {
    padding: 0;
    font-weight: 400;
    color: #333;
    background-color: #f5f6f6;
}

.grid thead th {
    height: 27px;
    font-size: 20px;
    line-height: 24px;
    vertical-align: bottom;
    border-right: 1px solid #d2d2d2;
    border-bottom: 1px solid #a8a8a8;
}

.grid thead th:first-child {
    width: 39px;
}

.grid thead th.cur {
    background-color: #d3d3d3;
    color: #1d6b40;
}

.corner svg {
    width: 20px;
    height: 20px;
    margin: 4px 0 0 16px;
}

.grid tbody th {
    border-right: 1px solid #a8a8a8;
    border-bottom: 1px solid #d2d2d2;
}

.grid tbody th.cur {
    background-color: #d3d3d3;
    color: #1d6b40;
}

.grid tr {
    height: 28px;
}

.grid td {
    padding: 0 0 0 4px;
    border: 1px solid #000;
    white-space: nowrap;
    overflow: hidden;
    vertical-align: bottom;
    line-height: 25px;
}

.grid td.ab {
    padding-left: 5px;
    border: none;
    border-right: 1px solid #dcdcdc;
    border-bottom: 1px solid #dcdcdc;
}

.grid td.ab + td.ab {
    border-right: none;
}

.grid .mid {
    text-align: center;
    padding: 0;
}

.head td {
    background-color: #c5d8ef;
}

.head td.ab {
    font-weight: 700;
    background-color: #c5d8ef;
    border-color: #c5d8ef;
}

.grid td.active {
    overflow: visible;
    position: relative;
    outline: 3px solid #1e7145;
    outline-offset: -2px;
    background-color: #fff;
}

.clip {
    overflow: hidden;
    width: 90px;
}

.handle {
    position: absolute;
    right: -5px;
    bottom: -5px;
    width: 8px;
    height: 8px;
    background-color: #1e7145;
    border: 1px solid #fff;
    box-sizing: content-box;
    width: 7px;
    height: 7px;
}

.blue td {
    background-color: #dbedf9;
}

.grid .blue td.ab {
    border-color: #d6e8f4;
}

.grid a {
    color: #2c74b8;
    text-decoration: underline;
}

.en {
    font-family: "Liberation Mono", monospace;
    font-size: 17.8px;
}

.vscroll {
    width: 32px;
    height: 602px;
    padding: 0 3px 0 4px;
    position: relative;
    display: flex;
    flex-direction: column;
    align-items: center;
    background-color: #e9edf0;
}

.vscroll::before {
    content: "";
    position: absolute;
    left: 4px;
    right: 3px;
    top: 0;
    bottom: 0;
    background-color: #f5f6f6;
    border-radius: 12px;
}

.arrow-up,
.arrow-down,
.arrow-left,
.arrow-right {
    position: relative;
    width: 0;
    height: 0;
    flex: none;
    border-style: solid;
    border-color: transparent;
}

.arrow-up {
    margin-top: 8px;
    border-width: 0 6px 10px;
    border-bottom-color: #666;
}

.arrow-down {
    margin-top: 47px;
    border-width: 10px 6px 0;
    border-top-color: #666;
}

.vthumb {
    position: relative;
    margin-top: 8px;
    width: 11px;
    height: 510px;
    border-radius: 6px;
    background-color: #6e6e6e;
}

.sheetbar {
    height: 48px;
    display: flex;
    align-items: center;
    background-color: #e9edf0;
    padding-left: 35px;
}

.sheet-nav {
    width: 10px;
    height: 18px;
}

.sheet-nav.next {
    margin-left: 38px;
}

.sheet-tab {
    margin-left: 33px;
    align-self: flex-start;
    width: 87px;
    height: 42px;
    background-color: #fff;
    border-radius: 0 0 8px 8px;
    padding: 0 12px;
    text-align: center;
}

.sheet-tab span {
    display: block;
    font-size: 21px;
    height: 35px;
    line-height: 39px;
    border-bottom: 3px solid #1a7a46;
}

.sheet-sep {
    width: 1px;
    height: 28px;
    margin-left: 6px;
    background-color: #c9c9c9;
}

.sheet-add {
    width: 18px;
    height: 18px;
    margin-left: 62px;
}

.sheet-dots {
    margin-left: 446px;
    width: 12px;
    text-align: center;
    font-weight: 700;
}

.hscroll {
    margin-left: 18px;
    width: 471px;
    height: 26px;
    border-radius: 13px;
    background-color: #f5f6f6;
    display: flex;
    align-items: center;
    padding-left: 7px;
}

.arrow-left {
    border-width: 6px 10px 6px 0;
    border-right-color: #666;
}

.hthumb {
    width: 386px;
    height: 12px;
    margin-left: 9px;
    border-radius: 6px;
    background-color: #6e6e6e;
}

.arrow-right {
    margin-left: 41px;
    border-width: 6px 0 6px 10px;
    border-left-color: #666;
}

/* side panel */

.panel {
    flex: 1;
    background-color: #fafafa;
    padding: 0 17px;
}

.panel-head {
    height: 61px;
    display: flex;
    align-items: center;
    padding-top: 1px;
}

.panel-head h2 {
    margin: 0;
    flex: 1;
    font-size: 22px;
    font-weight: 700;
}

.panel-head svg {
    width: 20px;
    height: 12px;
}

.panel-head .p-close {
    width: 16px;
    height: 16px;
    margin: 0 7px 0 31px;
}

.panel-btns {
    display: flex;
    gap: 12px;
    height: 49px;
}

.pbtn {
    width: 131px;
    background-color: #efefef;
    border-radius: 5px;
    display: flex;
    align-items: center;
    padding-left: 12px;
    gap: 8px;
    color: #333;
}

.pbtn.focus {
    border: 3px solid #222;
    padding-left: 9px;
}

.pbtn svg {
    width: 25px;
    height: 25px;
}

.gear {
    margin-left: auto;
    width: 63px;
    height: 47px;
    background-color: #f5f5f5;
    border-radius: 5px;
    display: flex;
    align-items: center;
    padding-left: 11px;
    gap: 6px;
}

.gear svg:first-child {
    width: 24px;
    height: 24px;
}

.card {
    height: 78px;
    margin: 13px 4px 0;
    background-color: #fff;
    border-radius: 6px;
    box-shadow: 0 1px 4px rgba(0, 0, 0, 0.2);
    display: flex;
    align-items: center;
    padding-left: 16px;
    font-size: 20px;
}

.card + .card {
    margin-top: 12px;
}

.card span {
    margin-left: 12px;
    padding-top: 3px;
    flex: 1;
}

.i-xl {
    width: 28px;
    height: 30px;
}

.more {
    display: flex;
    gap: 4px;
    margin-right: 34px;
    margin-bottom: 3px;
}

.more i {
    width: 5px;
    height: 5px;
    border-radius: 50%;
    background-color: #333;
}

/* status bar */

.status {
    height: 30px;
    flex: none;
    background-color: #f5f6f6;
    border-top: 1px solid #c8c8c8;
    display: flex;
    align-items: center;
    padding-left: 16px;
    font-size: 17.5px;
}

.i-access {
    width: 24px;
    height: 24px;
    margin: 0 4px 0 29px;
}

.views {
    margin-left: auto;
    align-self: stretch;
    display: flex;
}

.view {
    width: 60px;
    display: flex;
    align-items: center;
    justify-content: center;
}

.view.on {
    background-color: #e1e1e1;
}

.view svg {
    width: 20px;
    height: 24px;
}

.zoom {
    margin-left: 18px;
    display: flex;
    align-items: center;
    gap: 6px;
    color: #555;
}

.slider {
    width: 147px;
    height: 2px;
    background-color: #666;
    position: relative;
}

.slider i {
    position: absolute;
    left: 72px;
    top: -7px;
    width: 7px;
    height: 16px;
    background-color: #555;
}

.pct {
    margin-left: 23px;
    margin-right: 13px;
    font-size: 19px;
}

/* overlays */

.watermark {
    position: absolute;
    left: 1641px;
    top: 946px;
    font-size: 24.5px;
    line-height: 34px;
    white-space: nowrap;
    color: #b4b4b4;
    text-shadow: -1px -1px 0 #555, 1px 1px 0 #fff;
}

.arrows {
    position: absolute;
    left: 0;
    top: 0;
    width: 1920px;
    height: 1005px;
    pointer-events: none;
}

.arrows polygon {
    fill: #f54f50;
}
```
